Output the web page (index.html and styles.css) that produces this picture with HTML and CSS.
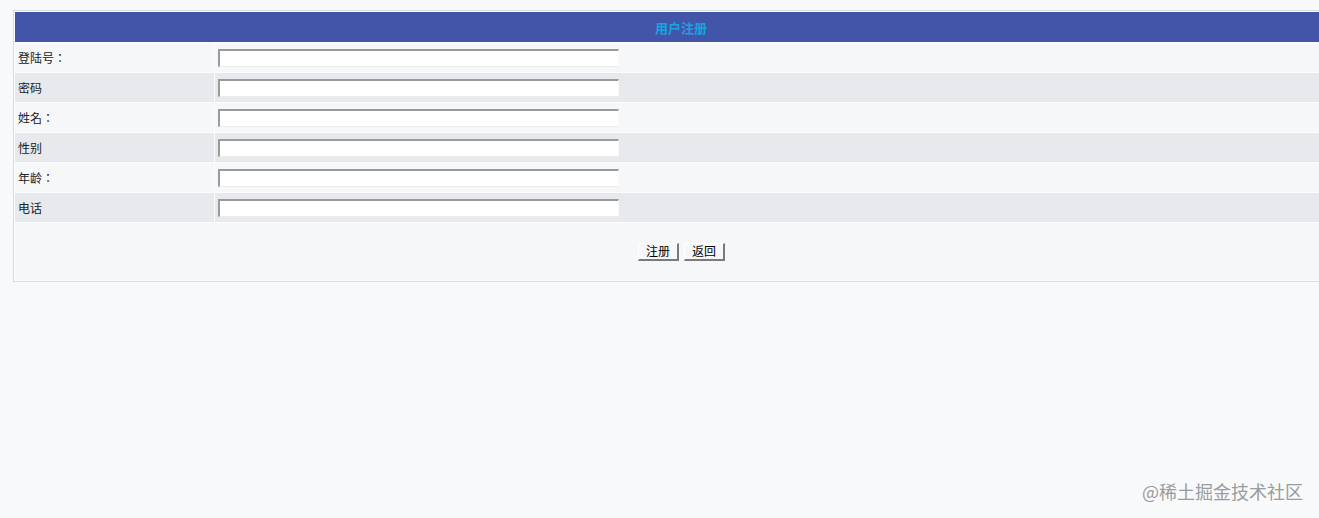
FILE: index.html
```html
<!DOCTYPE html>
<html lang="zh">
<head>
<meta charset="utf-8">
<title>用户注册</title>
<link rel="stylesheet" href="styles.css">
</head>
<body>
<div class="page">
  <form class="form">
    <table class="reg">
      <tr><th colspan="2" class="title">用户注册</th></tr>
      <tr class="odd"><td class="label" lang="zh-TW">登陆号：</td><td class="field"><input class="text" type="text"></td></tr>
      <tr class="even"><td class="label" lang="zh-TW">密码</td><td class="field"><input class="text" type="text"></td></tr>
      <tr class="odd"><td class="label" lang="zh-TW">姓名：</td><td class="field"><input class="text" type="text"></td></tr>
      <tr class="even"><td class="label" lang="zh-TW">性别</td><td class="field"><input class="text" type="text"></td></tr>
      <tr class="odd"><td class="label" lang="zh-TW">年龄：</td><td class="field"><input class="text" type="text"></td></tr>
      <tr class="even"><td class="label" lang="zh-TW">电话</td><td class="field"><input class="text" type="text"></td></tr>
      <tr class="odd"><td colspan="2" class="actions"><button type="button" class="btn">注册</button><button type="button" class="btn">返回</button></td></tr>
    </table>
  </form>
</div>
<div class="watermark">@稀土掘金技术社区</div>
</body>
</html>
```
FILE: styles.css
```css
html, body {
  margin: 0;
  padding: 0;
  background: #f8f9fa;
  overflow: hidden;
  height: 100%;
}
body {
  font-family: "Noto Sans CJK SC", "Liberation Sans", sans-serif;
  font-size: 12px;
  color: #222;
}
.page {
  padding: 11px 0 0 13px;
  overflow: hidden;
}
.form {
  margin: 0;
}
.reg {
  width: 1336px;
  border: 1px solid #d9dbdd;
  border-spacing: 1px;
  border-collapse: separate;
  background: #fbfcfd;
  margin: -1px 0 0 0;
}
.reg td, .reg th {
  padding: 0 3px;
}
.title {
  height: 30px;
  background: #4355a9;
  color: #1aa3e0;
  font-size: 13px;
  font-weight: bold;
  text-align: center;
}
.odd td {
  background: #f5f7f9;
}
.even td {
  background: #e7e9ec;
}
.label {
  width: 193px;
  height: 29px;
  line-height: 16px;
  font-family: "Noto Sans CJK TC", "Noto Sans CJK SC", sans-serif;
}
.field {
  height: 29px;
}
.text {
  display: block;
  box-sizing: border-box;
  width: 401px;
  height: 18px;
  margin: 0;
  padding: 0 2px;
  border: 2px solid;
  border-color: #9a9a9a #fafafa #ececec #9a9a9a;
  border-width: 2px 1px 1px 2px;
  background: #fff;
}
.actions {
  height: 57px;
  text-align: center;
}
.btn {
  box-sizing: border-box;
  width: 41px;
  height: 18px;
  margin: 0 2px 0 3px;
  padding: 0;
  font-family: "Noto Sans CJK SC", sans-serif;
  font-size: 12px;
  line-height: 14px;
  color: #000;
  background: #f6f7f8;
  border: 1px solid;
  border-width: 1px 2px 2px 1px;
  border-color: #ffffff #7a7a7a #7a7a7a #ffffff;
}
.watermark {
  position: absolute;
  right: 16px;
  bottom: 14px;
  font-size: 18px;
  color: #9a9c9e;
  font-family: "Noto Sans CJK SC", sans-serif;
}
```
